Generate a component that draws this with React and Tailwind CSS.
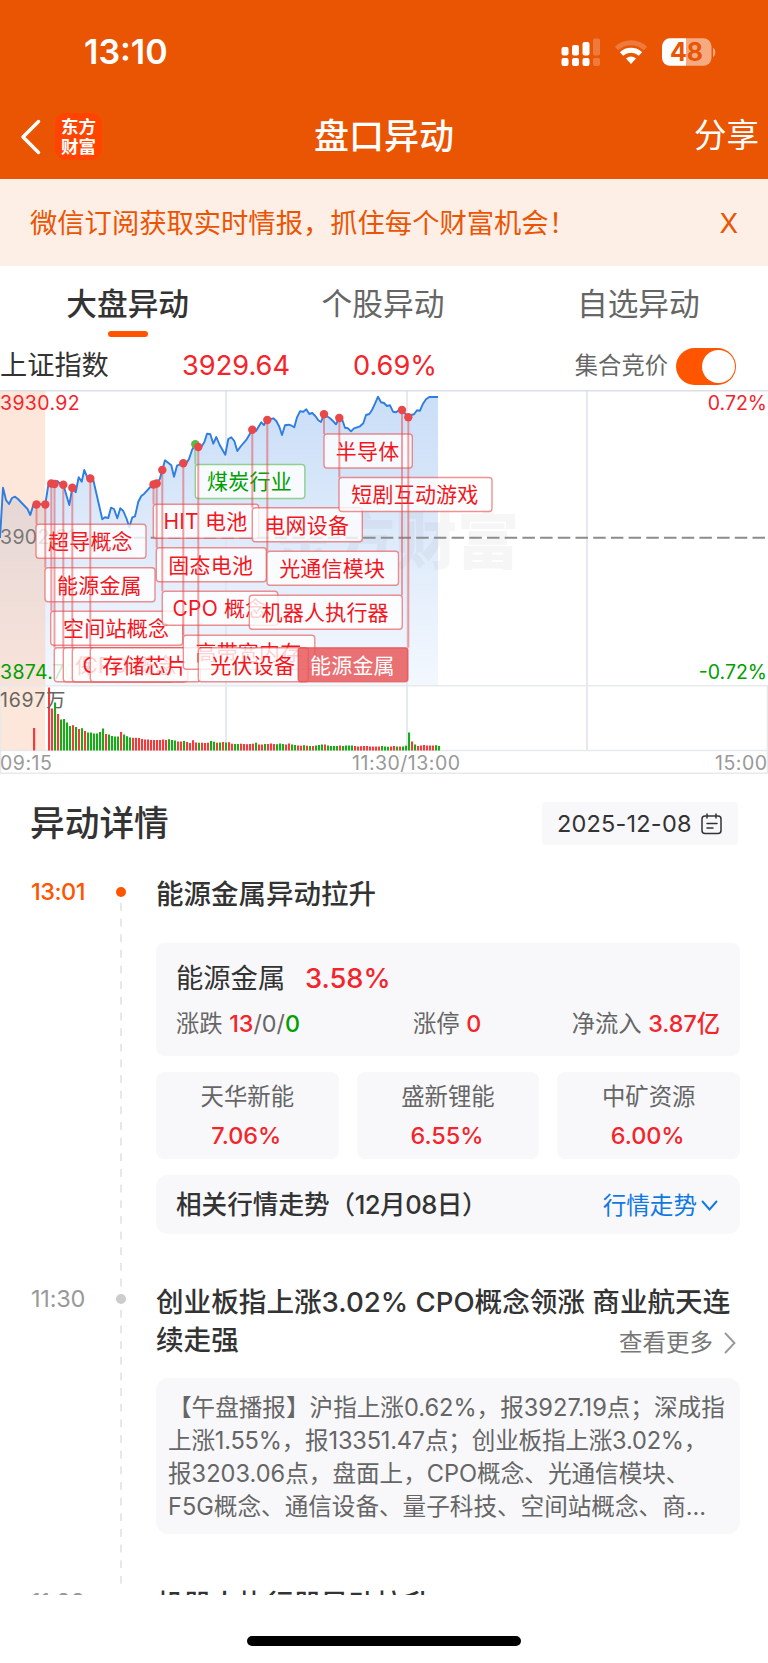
import React from 'react';

const linePoints =
  '0,538 3,487.7 6,500 9,504 12,498 15,496.7 18,499 27.5,509 30.3,515 33.3,505 36.5,504.3 45.3,504.3 48.3,485 51.3,482.7 54.5,484 57.3,481 60.3,484 63.3,484.7 69.3,505 72.3,487.7 75.7,492.3 78.7,477.3 81.7,481.7 84.3,470 87.3,477.3 90.3,478.3 93.3,480 102.3,519.3 105,517.3 108.3,518 111,507.7 114,509 117.3,518.3 120.3,508.3 123.3,511 126.7,519 129.3,527.3 132.3,517.3 135,516.3 138.3,501.7 141.3,496 144.3,493.7 150.3,487 153.7,484.3 156.7,483.3 159.7,479.3 162.3,470 165,460.3 171.3,465.3 174,476.7 177,465.7 183.3,463 186.5,463 189,459 192,450 195.3,444.3 198.3,447 201.7,446.3 204.3,442.3 207,433.7 210.3,434.3 213.3,443.7 216.3,437 219.7,445 222.7,450.3 225.3,454.7 228.3,439 231.3,437.3 234.3,441 237.3,451 241,446 246.7,439.3 252.3,429.7 256,431 261.3,422.3 264,425 267,420 273.3,418.3 276.3,421 279.3,426.7 282,435 285,425.3 288.7,424.7 291.7,425.7 294.3,427.3 297,417.3 300,411.3 303.3,411.7 306.3,409.3 309.3,414 312.3,413 315.3,416 318.3,420.3 321,422 324,414.3 330,418.3 333,421 336,424.3 339,418 342,419 345,427.7 348,428.3 351,431.3 354,428.3 360,426.3 363.3,423.3 366,415 369.3,414 372,410 375,403.7 378,396.7 381,402.3 384,403 387,406 390,405.3 393,411.7 396,412.3 398.7,410.3 402,409.7 405,413.3 408,416.3 411,415 414,414.3 417,410.3 420,410.7 423,403.7 426,399.3 429.3,397 438,397';

// dot: position on the line, box: left / top / width of the tag
const tags = [
  { dot: [36.5, 504.5], box: [36, 524.3, 110], text: '超导概念' },
  { dot: [45.3, 504.5], box: [45, 567.7, 110], text: '能源金属' },
  { dot: [51.3, 483.5], box: [50.7, 611.3, 132], text: '空间站概念' },
  { dot: [54.5, 484], box: [54.3, 647.7, 132], text: '通信设备' },
  { dot: [63.3, 484.8], box: [63.3, 647.7, 110], text: '保险概念' },
  { dot: [72.3, 487.7], box: [72.3, 647.7, 115.5], text: 'CPO 概念' },
  { dot: [90.3, 478.5], box: [90.3, 647.7, 110], text: '存储芯片' },
  { dot: [153.5, 484.5], box: [153.3, 504.3, 105.4], text: 'HIT 电池' },
  { dot: [156.7, 483.5], box: [156.3, 547.7, 110], text: '固态电池' },
  { dot: [162.3, 470], box: [162.3, 591.3, 115.5], text: 'CPO 概念' },
  { dot: [183.3, 463.3], box: [183.3, 635.3, 131.5], text: '高带宽内存' },
  { dot: [195.3, 444.3], box: [195.3, 464.5, 109.5], text: '煤炭行业', green: true },
  { dot: [198.3, 447], box: [198.3, 647.7, 110], text: '光伏设备' },
  { dot: [252.3, 429.7], box: [252.3, 507.7, 110], text: '电网设备' },
  { dot: [267.3, 420], box: [267, 551.3, 131.5], text: '光通信模块' },
  { dot: [324, 414.3], box: [324, 434, 88.3], text: '半导体' },
  { dot: [339.3, 418], box: [339, 477.5, 153], text: '短剧互动游戏' },
  { dot: [402, 410], box: [249.3, 595.3, 153], text: '机器人执行器' },
  { dot: [408.3, 417.3], box: [298, 647.7, 110], text: '能源金属', active: true },
];

const volumes = [
  63, 42, 48, 36.5, 31, 31.5, 28, 24.5, 25.3, 23.5, 21.5, 22.3, 19.5, 18, 18, 17, 17, 18.5, 22, 16.5, 16, 14.5, 14, 14, 18.5, 16,
  14.3, 13, 12.7, 12.7, 12.5, 11.5, 11, 11, 10.5, 10.5, 10.5, 10.5, 11, 10.5, 11.3, 10.5, 10, 9, 9, 9.5, 8.5, 7.5, 10.3, 8, 7.8, 7.8,
  7.5, 7.8, 9.5, 8.8, 7.8, 8, 8.5, 8, 8.3, 6.8, 6.5, 6.5, 6.8, 6.5, 6.3, 6.5, 6.8, 7.8, 6, 6, 6.5, 6.5, 7, 6.5, 6.3, 7, 6.5, 6, 7, 6,
  5.5, 5, 4.8, 5.3, 4.8, 4.5, 4.5, 5, 5.5, 6, 6, 5, 4.5, 4.5, 4.5, 5, 4.5, 5, 5, 5, 4.5, 4, 4.3, 4.5, 4.5, 4, 4, 4, 4, 4.5, 4, 3.8,
  4, 4.5, 4, 4, 4, 4.8, 18, 9, 6, 4.5, 5, 5.5, 5, 5, 5, 5.3, 4.5,
];
const colors =
  'rrgrggggrg' + 'rgrggggggr' + 'ggggrgggrr' + 'rrrrrrrrrr' + 'gggrrgrrrr' + 'grrrggrgrg' + 'rrggrrrrrg' +
  'rrgrrrgggr' + 'rggrrgrgrg' + 'ggrggggrgg' + 'ggrrrrrrrr' + 'rgggrrgrgg' + 'grgrrrrrrgg';

const stocks = [
  { name: '天华新能', change: '7.06%' },
  { name: '盛新锂能', change: '6.55%' },
  { name: '中矿资源', change: '6.00%' },
];

const StatusBar = () => (
  <div className="flex h-[103px] items-center justify-between pl-[84px] pr-[51px] text-white">
    <span className="text-[34px] font-semibold leading-none">13:10</span>
    <svg width="156" height="30" viewBox="561 36 156 30" fill="#fff">
      <rect x="561.5" y="46" width="7" height="8.5" rx="2" />
      <rect x="572" y="44" width="7" height="10.5" rx="2" />
      <rect x="582.5" y="41" width="7" height="13.5" rx="2" />
      <rect x="593" y="37.5" width="7" height="17" rx="2" opacity=".22" />
      <rect x="561.5" y="57" width="7" height="8" rx="2" />
      <rect x="572" y="57" width="7" height="8" rx="2" />
      <rect x="582.5" y="57" width="7" height="8" rx="2" />
      <rect x="593" y="57" width="7" height="8" rx="2" opacity=".22" />
      <path d="M616.5 47.5a21 21 0 0 1 29 0" fill="none" stroke="#fff" strokeWidth="5" opacity=".22" />
      <path d="M621.5 53a14 14 0 0 1 19 0" fill="none" stroke="#fff" strokeWidth="5" />
      <path d="M631 63l-5-5.500a8 8 0 0 1 10 0z" />
      <path d="M670 37.300h16v27.500h-16a8 8 0 0 1-8-8V45.300a8 8 0 0 1 8-8z" />
      <path d="M686 37.300h17.500a8 8 0 0 1 8 8v11.500a8 8 0 0 1-8 8H686z" opacity=".5" />
      <path d="M713 47c3 .6 3 8 0 9z" opacity=".5" />
      <text x="686.5" y="60" textAnchor="middle" fontSize="25" fontWeight="700" fill="#ea5504">48</text>
    </svg>
  </div>
);

const NavBar = () => (
  <div className="flex h-[67px] items-center justify-between pl-[20px] pr-[9px] text-white">
    <div className="flex w-[104px] items-center gap-[14px]">
      <svg width="21" height="36" viewBox="0 0 21 36" fill="none" stroke="#fff" strokeWidth="3.5" strokeLinecap="round" strokeLinejoin="round">
        <path d="M18.500 2.500L3 18l15.500 15.500" />
      </svg>
      <div className="flex h-[47px] w-[47px] shrink-0 flex-col items-center justify-center rounded-[11px] bg-[#ff4400] text-[17.5px] font-bold leading-[19.5px]">
        <span>东方</span>
        <span>财富</span>
      </div>
    </div>
    <h1 className="mr-[11px] flex-1 text-center text-[35px] font-medium leading-none">盘口异动</h1>
    <span className="w-[104px] text-right text-[32.5px] leading-none">分享</span>
  </div>
);

const Chart = () => (
  <svg width="768" height="385" viewBox="0 390 768 385" className="block">
    <defs>
      <linearGradient id="area" x1="0" y1="0" x2="0" y2="1">
        <stop offset="0" stopColor="#cadef7" />
        <stop offset="1" stopColor="#f3f8fe" />
      </linearGradient>
      <linearGradient id="auction" x1="0" y1="0" x2="0" y2="1">
        <stop offset="0" stopColor="#dbd1d4" />
        <stop offset="1" stopColor="#f8e3da" />
      </linearGradient>
      <clipPath id="pre">
        <rect x="0" y="390" width="45.3" height="296" />
      </clipPath>
    </defs>
    <rect x="0" y="391" width="45.3" height="359" fill="#fde6da" />
    <polygon points={`0,686 ${linePoints} 438,686`} fill="url(#area)" />
    <polygon points={`0,686 ${linePoints} 438,686`} fill="url(#auction)" clipPath="url(#pre)" />
    <text x="271" y="564" fontSize="62" fontWeight="900" fill="#000" opacity=".03">东方财富</text>
    <g stroke="#e2e4ee" strokeWidth="1.6">
      <path d="M226 391V750M407 391V750M587 391V750" />
      <path d="M0 390.700H768" stroke="#dcdfe6" />
      <path d="M0 685.700H768M0 750.500H768M0 773.200H768M.5 686V773M767.500 686V773" stroke="#e8e9ec" />
    </g>
    <path d="M134 537.700H768" stroke="#8c8c8c" strokeWidth="2" strokeDasharray="12.5 5.2" strokeDashoffset="1" />
    <g fontSize="19.5">
      <text x="0" y="409.5" letterSpacing=".35" fill="#f4242a">3930.92</text>
      <text x="0" y="543.5" letterSpacing=".35" fill="#777">3902.81</text>
      <text x="0" y="678.5" letterSpacing=".35" fill="#00a000">3874.70</text>
      <text x="767" y="409.5" textAnchor="end" fill="#f4242a">0.72%</text>
      <text x="767" y="678.5" textAnchor="end" fill="#00a000">-0.72%</text>
    </g>
    <polyline points={linePoints} fill="none" stroke="#2e7de0" strokeWidth="1.9" strokeLinejoin="round" />
    {tags.map(({ dot, box, text, green, active }, index) => {
      const color = green ? '#58b947' : '#e8484a';
      return (
        <g key={index}>
          <path d={`M${dot[0]} ${dot[1]}V${box[1]}`} stroke={color} strokeWidth="2" opacity=".5" />
          <rect x={box[0]} y={box[1]} width={box[2]} height="34" rx="3" fill={active ? '#e8585a' : '#fff'} fillOpacity={active ? 0.85 : 0.8} stroke={color} strokeOpacity=".6" strokeWidth="1.4" />
          <text x={box[0] + box[2] / 2 - 0.6} y={box[1] + 24.8} textAnchor="middle" fontSize="21" letterSpacing=".2" fill={active ? '#fff' : green ? '#00a000' : '#f4161c'}>
            {text}
          </text>
        </g>
      );
    })}
    {tags.map(({ dot, green }, index) => (
      <circle key={index} cx={dot[0]} cy={dot[1]} r="4.2" fill={green ? '#58b947' : '#e8484a'} />
    ))}
    <rect x="33" y="728" width="2.2" height="22.5" fill="#f03c3c" />
    {volumes.slice(0, 131).map((height, index) => (
      <rect key={index} x={48 + index * 3} y={750.5 - height} width="2.1" height={height} fill={colors[index] === 'g' ? '#19aa19' : '#f03c3c'} />
    ))}
    <g fontSize="19.5" letterSpacing=".5">
      <text x="0" y="706.5" letterSpacing=".8" fill="#666">1697万</text>
      <text x="0" y="769.5" fill="#999">09:15</text>
      <text x="406.3" y="769.5" textAnchor="middle" fill="#999">11:30/13:00</text>
      <text x="767.5" y="769.5" textAnchor="end" fill="#999">15:00</text>
    </g>
  </svg>
);

const TimeCell = ({ time, active }) => (
  <div className="flex w-[156px] shrink-0 items-start pl-[31px]">
    <span className={`w-[85px] text-[23.5px] leading-[28px] ${active ? 'font-medium tracking-[-0.5px] text-[#ff5500]' : 'tracking-[-0.2px] text-[#999]'}`}>{time}</span>
    <span className={`mt-[9px] h-[10px] w-[10px] rounded-full ring-[6px] ring-white ${active ? 'bg-[#ff5500]' : 'bg-[#ccc]'}`} />
  </div>
);

const App = () => {
  return (
    <div className="h-[1663px] w-[768px] overflow-hidden bg-white font-['Inter','Noto_Sans_CJK_SC',sans-serif] text-[#333]">
      <header className="h-[179px] bg-[#ea5504]">
        <StatusBar />
        <NavBar />
      </header>

      <div className="flex h-[87px] items-center justify-between bg-[#fdeee6] pl-[30px] pr-[30px] pt-[3px] text-[27.3px] text-[#ea5504]">
        <span>微信订阅获取实时情报，抓住每个财富机会！</span>
        <span>X</span>
      </div>

      <div className="grid h-[72px] grid-cols-3 pr-[2px] pt-[14px] text-center text-[30.7px] leading-[48px] text-[#666]">
        <div className="flex flex-col items-center font-medium text-[#333]">
          大盘异动
          <span className="ml-[1px] mt-[3px] h-[6px] w-[40px] rounded-[3px] bg-[#ff5500]" />
        </div>
        <span>个股异动</span>
        <span>自选异动</span>
      </div>

      <div className="flex h-[52px] items-center pr-[32px] pt-[4px] text-[27.2px]">
        <span className="w-[182px]">上证指数</span>
        <span className="w-[171px] text-[#f4242a]">3929.64</span>
        <span className="flex-1 text-[#f4242a]">0.69%</span>
        <span className="mr-[8px] text-[23.3px] text-[#666]">集合竞价</span>
        <span className="flex h-[37px] w-[60px] items-center justify-end rounded-full bg-[#ff5500] pr-[1.5px]">
          <span className="h-[33px] w-[33px] rounded-full bg-white" />
        </span>
      </div>

      <Chart />

      <div className="flex items-center justify-between pl-[30px] pr-[30px] pt-[27px]">
        <h2 className="text-[34.7px] font-medium leading-[43px]">异动详情</h2>
        <div className="flex h-[43px] items-center rounded-[4px] bg-[#f8f8fb] pl-[15px] pr-[16px] text-[23.5px]">
          <span className="w-[144px] tracking-[0.2px]">2025-12-08</span>
          <svg width="21" height="22" viewBox="0 0 21 22" fill="none" stroke="#333" strokeWidth="1.5" strokeLinecap="round">
            <rect x="1" y="3" width="19" height="17.5" rx="3" />
            <path d="M6 1v4M15 1v4M6 10.500h10M6 15h6" />
          </svg>
        </div>
      </div>

      <div className="relative mt-[33px] h-[717px] overflow-hidden">
        <svg width="2" height="700" viewBox="0 0 2 700" className="absolute left-[120px] top-[25px]">
          <path d="M1 0V692" stroke="#d0d0d0" strokeWidth="1" strokeDasharray="7.8 7.85" />
        </svg>

        <div className="relative flex h-[407px]">
          <TimeCell time="13:01" active />
          <div className="w-[584px]">
            <h3 className="text-[27.5px] font-medium leading-[33px]">能源金属异动拉升</h3>
            <div className="mt-[32px] h-[113px] rounded-[8px] bg-[#f8f8fb] px-5 pt-[16px]">
              <div className="flex items-center text-[27.3px] leading-10">
                <span className="w-[129px]">能源金属</span>
                <span className="font-medium text-[#f4242a]">3.58%</span>
              </div>
              <div className="mt-[6px] flex text-[23.3px] leading-[38px] text-[#666]">
                <span className="w-[237px]">涨跌 <b className="font-medium text-[#f4242a]">13</b>/0/<b className="font-medium text-[#00a000]">0</b></span>
                <span>涨停 <b className="font-medium text-[#f4242a]">0</b></span>
                <span className="ml-auto">净流入 <b className="font-medium text-[#f4242a]">3.87亿</b></span>
              </div>
            </div>
            <div className="mt-[16px] grid grid-cols-3 gap-[18px]">
              {stocks.map((stock) => (
                <div key={stock.name} className="h-[87px] rounded-[8px] bg-[#f8f8fb] pt-[5px] text-center text-[23.4px] leading-[39px]">
                  <p className="text-[#666]">{stock.name}</p>
                  <p className="pr-[2px] font-medium text-[#f4242a]">{stock.change}</p>
                </div>
              ))}
            </div>
            <div className="mt-[16px] flex h-[59px] items-center justify-between rounded-[12px] bg-[#f8f8fb] pl-5 pr-[22px] pt-[2px] text-[25.6px]">
              <span className="font-medium">相关行情走势<span className="tracking-[-0.5px]">（12月08日）</span></span>
              <span className="flex items-center gap-[4px] text-[23.6px] text-[#1078e4]">
                行情走势
                <svg width="17" height="11" viewBox="0 0 17 11" fill="none" stroke="#1078e4" strokeWidth="1.9" strokeLinecap="round">
                  <path d="M1.500 1.500l7 8 7-8" />
                </svg>
              </span>
            </div>
          </div>
        </div>

        <div className="relative flex h-[303px]">
          <TimeCell time="11:30" />
          <div className="w-[590px]">
            <div className="relative -mt-[2px]">
              <h3 className="text-[27.6px] font-medium leading-[38.2px]">创业板指上涨3.02% CPO概念领涨 商业航天连续走强</h3>
              <span className="absolute bottom-[-1px] right-[10px] flex items-center gap-[11px] text-[23.5px] leading-[34px] text-[#777]">
                查看更多
                <svg width="12" height="22" viewBox="0 0 12 22" fill="none" stroke="#999" strokeWidth="1.9" strokeLinecap="round">
                  <path d="M1.500 1.500L10.500 11l-9 9.500" />
                </svg>
              </span>
            </div>
            <p className="mt-[19px] h-[156px] w-[584px] whitespace-nowrap rounded-[12px] bg-[#f8f8fb] px-3 pt-[13px] text-[23.6px] leading-[33px] text-[#666]">
              【午盘播报】沪指上涨0.62%，报3927.19点；深成指<br />
              <span className="tracking-[-0.2px]">上涨1.55%，报13351.47点；创业板指上涨3.02%，</span><br />
              报3203.06点，盘面上，CPO概念、光通信模块、<br />
              F5G概念、通信设备、量子科技、空间站概念、商...
            </p>
          </div>
        </div>

        <div className="relative flex">
          <TimeCell time="11:28" />
          <h3 className="text-[27.5px] font-medium leading-[33px]">机器人执行器异动拉升</h3>
        </div>
      </div>

      <div className="mx-auto mt-[41px] h-[10px] w-[274px] rounded-full bg-black" />
    </div>
  );
};

export default App;
